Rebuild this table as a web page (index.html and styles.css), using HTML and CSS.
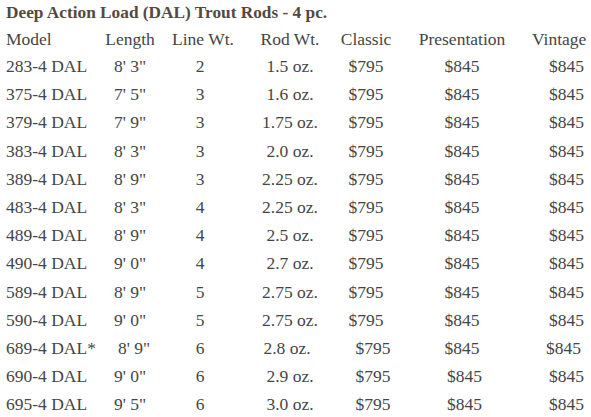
FILE: index.html
```html
<!DOCTYPE html>
<html lang="en">
<head>
<meta charset="utf-8">
<title>Deep Action Load (DAL) Trout Rods - 4 pc.</title>
<link rel="stylesheet" href="styles.css">
</head>
<body>
<div class="page">
  <h1 class="title">Deep Action Load (DAL) Trout Rods - 4 pc.</h1>
  <div class="rods">
    <div class="row head">
      <span class="c model">Model</span><span class="c">Length</span><span class="c lw">Line Wt.</span><span class="c">Rod Wt.</span><span class="c">Classic</span><span class="c">Presentation</span><span class="c vint">Vintage</span>
    </div>
    <div class="row"><span class="c model">283-4 DAL</span><span class="c">8' 3"</span><span class="c">2</span><span class="c">1.5 oz.</span><span class="c">$795</span><span class="c">$845</span><span class="c vint">$845</span></div>
    <div class="row"><span class="c model">375-4 DAL</span><span class="c">7' 5"</span><span class="c">3</span><span class="c">1.6 oz.</span><span class="c">$795</span><span class="c">$845</span><span class="c vint">$845</span></div>
    <div class="row"><span class="c model">379-4 DAL</span><span class="c">7' 9"</span><span class="c">3</span><span class="c">1.75 oz.</span><span class="c">$795</span><span class="c">$845</span><span class="c vint">$845</span></div>
    <div class="row"><span class="c model">383-4 DAL</span><span class="c">8' 3"</span><span class="c">3</span><span class="c">2.0 oz.</span><span class="c">$795</span><span class="c">$845</span><span class="c vint">$845</span></div>
    <div class="row"><span class="c model">389-4 DAL</span><span class="c">8' 9"</span><span class="c">3</span><span class="c">2.25 oz.</span><span class="c">$795</span><span class="c">$845</span><span class="c vint">$845</span></div>
    <div class="row"><span class="c model">483-4 DAL</span><span class="c">8' 3"</span><span class="c">4</span><span class="c">2.25 oz.</span><span class="c">$795</span><span class="c">$845</span><span class="c vint">$845</span></div>
    <div class="row"><span class="c model">489-4 DAL</span><span class="c">8' 9"</span><span class="c">4</span><span class="c">2.5 oz.</span><span class="c">$795</span><span class="c">$845</span><span class="c vint">$845</span></div>
    <div class="row"><span class="c model">490-4 DAL</span><span class="c">9' 0"</span><span class="c">4</span><span class="c">2.7 oz.</span><span class="c">$795</span><span class="c">$845</span><span class="c vint">$845</span></div>
    <div class="row"><span class="c model">589-4 DAL</span><span class="c">8' 9"</span><span class="c">5</span><span class="c">2.75 oz.</span><span class="c">$795</span><span class="c">$845</span><span class="c vint">$845</span></div>
    <div class="row"><span class="c model">590-4 DAL</span><span class="c">9' 0"</span><span class="c">5</span><span class="c">2.75 oz.</span><span class="c">$795</span><span class="c">$845</span><span class="c vint">$845</span></div>
    <div class="row late star"><span class="c model">689-4 DAL*</span><span class="c len">8' 9"</span><span class="c">6</span><span class="c rw">2.8 oz.</span><span class="c cl">$795</span><span class="c">$845</span><span class="c vint">$845</span></div>
    <div class="row late"><span class="c model">690-4 DAL</span><span class="c">9' 0"</span><span class="c">6</span><span class="c">2.9 oz.</span><span class="c cl">$795</span><span class="c pr">$845</span><span class="c vint">$845</span></div>
    <div class="row late"><span class="c model">695-4 DAL</span><span class="c">9' 5"</span><span class="c">6</span><span class="c">3.0 oz.</span><span class="c cl">$795</span><span class="c pr">$845</span><span class="c vint">$845</span></div>
  </div>
</div>
</body>
</html>
```

FILE: styles.css
```css
html, body {
  margin: 0;
  padding: 0;
  background: #ffffff;
}

.page {
  width: 591px;
  font-family: "Liberation Serif", "Times New Roman", serif;
  color: #454545;
}

.title {
  margin: 0;
  padding-left: 6px;
  height: 27px;
  font-family: "Liberation Serif", "Times New Roman", serif;
  font-size: 17.3px;
  line-height: 26px;
  font-weight: bold;
  color: #55493f;
}

.rods {
  display: grid;
  grid-template-columns: 100px 60px 80px 100px 52px 140px 52px;
  grid-template-rows: 25px;
  grid-auto-rows: 28.2px;
  font-family: "Liberation Serif", "Times New Roman", serif;
  font-size: 17.5px;
  line-height: 28.2px;
}

.row {
  display: contents;
}

.c {
  text-align: center;
  white-space: nowrap;
}

.model {
  text-align: left;
  padding-left: 6px;
}

.vint {
  text-align: right;
}

.head .c {
  line-height: 25px;
}

.head .lw {
  padding-left: 6px;
}

.late .cl {
  padding-left: 14px;
}

.late .pr {
  padding-left: 5px;
}

.star .len {
  padding-left: 8px;
}

.star .rw {
  padding-right: 6px;
}

.star .vint {
  padding-right: 3px;
}
```
